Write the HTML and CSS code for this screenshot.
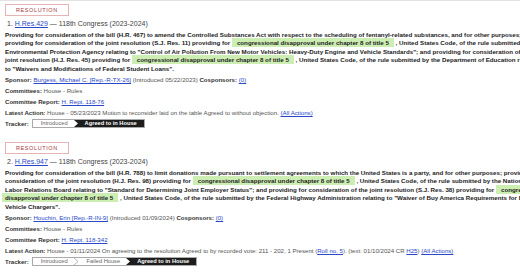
FILE: index.html
```html
<!DOCTYPE html>
<html>
<head>
    <meta charset="utf-8">
    <title>Search results</title>
    <link rel="stylesheet" href="styles.css">
</head>
<body>
<ol class="results">
    <!--第一条-->
    <li class="result">
        <span class="badge">RESOLUTION</span>
        <div class="result-heading">1. <a href="#">H.Res.429</a> — 118th Congress (2023-2024)</div>
        <p class="desc">Providing for consideration of the bill (H.R. 467) to amend the Controlled Substances Act with respect to the scheduling of fentanyl-related substances, and for other purposes;<br>providing for consideration of the joint resolution (S.J. Res. 11) providing for <span class="hl">congressional disapproval under chapter 8 of title 5</span> , United States Code, of the rule submitted by the<br>Environmental Protection Agency relating to "Control of Air Pollution From New Motor Vehicles: Heavy-Duty Engine and Vehicle Standards"; and providing for consideration of the<br>joint resolution (H.J. Res. 45) providing for <span class="hl">congressional disapproval under chapter 8 of title 5</span> , United States Code, of the rule submitted by the Department of Education relating<br>to "Waivers and Modifications of Federal Student Loans".</p>
        <div class="meta"><b>Sponsor:</b> <a href="#">Burgess, Michael C. [Rep.-R-TX-26]</a> (Introduced 05/22/2023) <b>Cosponsors:</b> <a href="#">(0)</a></div>
        <div class="meta"><b>Committees:</b> House - Rules</div>
        <div class="meta"><b>Committee Report:</b> <a href="#">H. Rept. 118-76</a></div>
        <div class="meta"><b>Latest Action:</b> House - 05/23/2023 Motion to reconsider laid on the table Agreed to without objection. <a href="#">(All Actions)</a></div>
        <div class="meta tracker-row">
            <b>Tracker:</b>
            <div class="tracker">
                <span class="step">Introduced</span>
                <svg class="sep" width="5" height="7" viewBox="0 0 5 7" preserveAspectRatio="none"><rect width="5" height="7" fill="#fff"/><polygon points="0,0 5,0 5,7 0,7 4,3.5" fill="#1d1d1d"/></svg>
                <span class="step current">Agreed to in House</span>
            </div>
        </div>
    </li>
    <!--第二条-->
    <li class="result">
        <span class="badge">RESOLUTION</span>
        <div class="result-heading">2. <a href="#">H.Res.947</a> — 118th Congress (2023-2024)</div>
        <p class="desc">Providing for consideration of the bill (H.R. 788) to limit donations made pursuant to settlement agreements to which the United States is a party, and for other purposes; providing for<br>consideration of the joint resolution (H.J. Res. 98) providing for <span class="hl">congressional disapproval under chapter 8 of title 5</span> , United States Code, of the rule submitted by the National<br>Labor Relations Board relating to "Standard for Determining Joint Employer Status"; and providing for consideration of the joint resolution (S.J. Res. 38) providing for <span class="hl hl-start">congressional</span><br><span class="hl hl-end">disapproval under chapter 8 of title 5</span> , United States Code, of the rule submitted by the Federal Highway Administration relating to "Waiver of Buy America Requirements for Electric<br>Vehicle Chargers".</p>
        <div class="meta"><b>Sponsor:</b> <a href="#">Houchin, Erin [Rep.-R-IN-9]</a> (Introduced 01/09/2024) <b>Cosponsors:</b> <a href="#">(0)</a></div>
        <div class="meta"><b>Committees:</b> House - Rules</div>
        <div class="meta"><b>Committee Report:</b> <a href="#">H. Rept. 118-342</a></div>
        <div class="meta"><b>Latest Action:</b> House - 01/11/2024 On agreeing to the resolution Agreed to by recorded vote: 211 - 202, 1 Present (<a href="#">Roll no. 5</a>). (text: 01/10/2024 CR <a href="#">H25</a>) <a href="#">(All Actions)</a></div>
        <div class="meta tracker-row">
            <b>Tracker:</b>
            <div class="tracker">
                <span class="step">Introduced</span>
                <svg class="sep" width="5" height="7" viewBox="0 0 5 7" preserveAspectRatio="none"><polyline points="0,0 4,3.5 0,7" fill="none" stroke="#999" stroke-width="0.7"/></svg>
                <span class="step">Failed House</span>
                <svg class="sep" width="5" height="7" viewBox="0 0 5 7" preserveAspectRatio="none"><rect width="5" height="7" fill="#fff"/><polygon points="0,0 5,0 5,7 0,7 4,3.5" fill="#1d1d1d"/></svg>
                <span class="step current">Agreed to in House</span>
            </div>
        </div>
    </li>
</ol>
</body>
</html>
```

FILE: styles.css
```css
html,body{margin: 0;}
body{
	background: #fff;
	border-top: 1px solid #e2e2e2;
	font-family: "Liberation Sans", Arial, sans-serif;
	color: #222;
	overflow: hidden;
	width: 520px;
	height: 271px;
}
.results{
	list-style: none;
	margin: 0;
	padding: 0 0 0 5px;
}
.result{
	padding: 3px 0 10px;
}
a{
	color: #2a48c8;
	text-decoration: underline;
}
.badge{
	display: block;
	width: fit-content;
	height: 10px;
	line-height: 10px;
	padding: 0 10px;
	border: 1px solid #e6b3b6;
	color: #a83a42;
	font-size: 5.5px;
	letter-spacing: .6px;
}
.result-heading{
	margin-top: 3px;
	padding-left: 2px;
	height: 10px;
	line-height: 10px;
	font-size: 7px;
	color: #444;
	white-space: nowrap;
}
.desc{
	margin: 2px 0 0;
	font-size: 6.2px;
	line-height: 8.4px;
	font-weight: bold;
	color: #222;
	white-space: nowrap;
}
.hl{
	background: #cdeeb3;
	padding: 1px 5px;
}
.hl-start{padding-right: 3px;}
.hl-end{margin-left: -3px; padding-left: 3px;}
.meta{
	height: 11px;
	line-height: 11px;
	font-size: 6.1px;
	color: #555;
	white-space: nowrap;
}
.desc + .meta{margin-top: 1px;}
.meta b{color: #333;}
.tracker-row{
	display: flex;
	align-items: center;
	gap: 3px;
}
.tracker{
	display: flex;
	align-items: stretch;
	height: 9px;
	border: 1px solid #aaa;
	box-sizing: border-box;
	font-size: 5.7px;
	line-height: 7px;
}
.step{
	padding: 0 6px 0 8px;
	color: #666;
	background: #fff;
}
.step.current{
	padding: 0 7px 0 6px;
	background: #1d1d1d;
	color: #fff;
	font-weight: bold;
}
.sep{
	display: block;
	height: 7px;
	width: 5px;
}
```
